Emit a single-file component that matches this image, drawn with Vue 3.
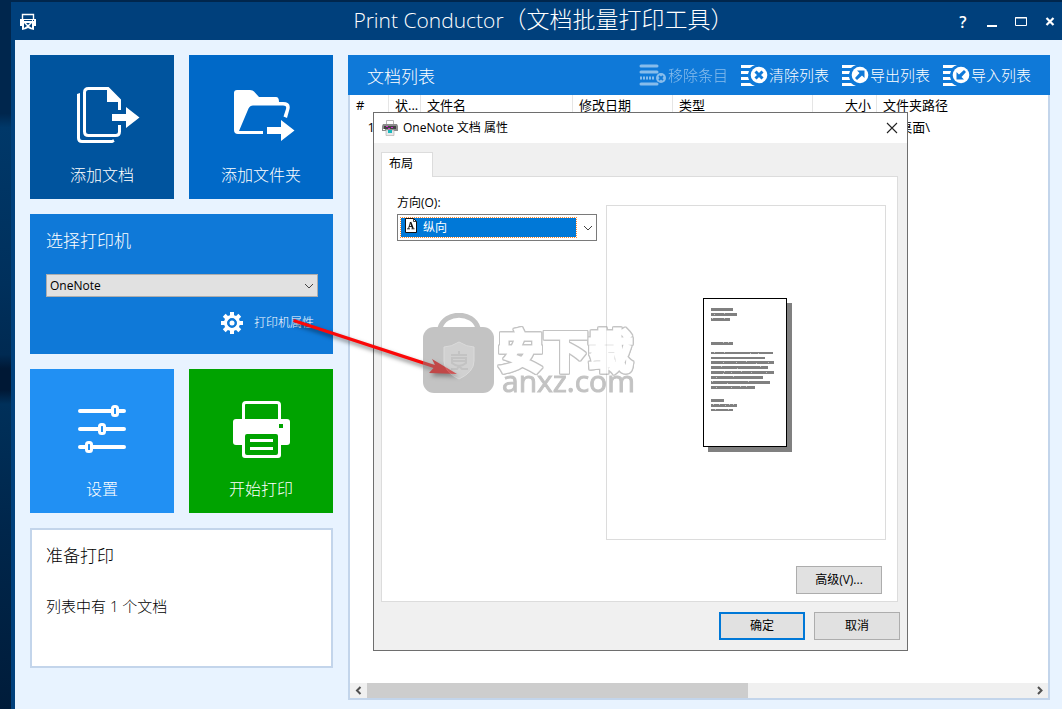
<script setup>
import { ref } from 'vue'

const printer = ref('OneNote')
const orientation = ref('纵向')

const columns = [
  { label: '#', cls: 'c-num' },
  { label: '状...', cls: 'c-state' },
  { label: '文件名', cls: 'c-name' },
  { label: '修改日期', cls: 'c-date' },
  { label: '类型', cls: 'c-type' },
  { label: '大小', cls: 'c-size' },
  { label: '文件夹路径', cls: 'c-path' }
]

const actions = [
  { label: '移除条目', kind: 'remove', disabled: true },
  { label: '清除列表', kind: 'clear' },
  { label: '导出列表', kind: 'export' },
  { label: '导入列表', kind: 'import' }
]

const previewLines = [
  [11, 22, 3], [16, 26, 3], [21, 19, 3],
  [45, 22, 3],
  [55, 62, 2], [60, 54, 2], [64, 63, 3], [69, 57, 3], [74, 63, 3], [79, 52, 3], [84, 59, 3], [89, 44, 3],
  [102, 13, 3], [107, 26, 3], [112, 22, 2]
]
const specks = [
  [12, 17], [22, 16], [10, 21], [22, 21], [21, 45], [26, 45], [12, 55], [22, 55], [48, 56], [56, 56],
  [21, 65], [34, 65], [44, 64], [54, 66], [66, 65], [19, 69], [35, 71], [58, 69], [22, 74], [21, 76],
  [29, 75], [39, 74], [49, 75], [64, 75], [14, 80], [31, 79], [10, 84], [25, 86], [46, 84],
  [14, 90], [29, 90], [38, 89], [44, 89], [11, 107], [17, 107], [23, 108], [27, 107], [31, 107], [13, 112], [26, 112]
]
</script>

<template>
  <div class="desktop">
    <div class="window">
      <header class="titlebar">
        <svg class="app-icon" width="18" height="18" viewBox="0 0 18 18">
          <path d="M3.500 6V1.500h11V6" fill="none" stroke="#fff" stroke-width="1.400" />
          <path fill="#fff" fill-rule="evenodd" d="M1 6h16v7h-2v4l-4-1-2-1-2 1-4 1v-4H1zM5 7v1h8V7zM14 7v1h1V7zM5 10v5l3-2zM13 10l-3 3 3 2zM7 10l2 2 2-2z" />
        </svg>
        <h1><span>Print Conductor</span>（文档批量打印工具）</h1>
        <div class="win-buttons">
          <button type="button" aria-label="帮助">?</button>
          <button type="button" aria-label="最小化"><svg width="12" height="14" viewBox="0 0 12 14"><path d="M1 11h10" stroke="#fff" stroke-width="2" /></svg></button>
          <button type="button" aria-label="最大化"><svg width="12" height="14" viewBox="0 0 12 14"><path d="M.5 2.500h11v8H.5zM0 3h12" fill="none" stroke="#fff" stroke-width="1" /></svg></button>
          <button type="button" aria-label="关闭"><svg width="12" height="14" viewBox="0 0 12 14"><path d="M2.500 3l7 7M9.500 3l-7 7" stroke="#fff" stroke-width="2.200" /></svg></button>
        </div>
      </header>

      <main class="content">
        <aside class="side">
          <div class="tiles">
            <button type="button" class="tile navy">
              <svg width="144" height="104" viewBox="0 0 144 104">
                <g fill="none" stroke="#fff" stroke-width="3">
                  <path d="M89.500 55V45L78 33.500H58.500q-4 0-4 4v39q0 4 4 4h27q4 0 4-4V70" />
                  <path d="M48.500 40v43q0 3.500 3.500 3.500h30l2-1" />
                </g>
                <path fill="#fff" d="M77 33v14h13v-2zM82 59h14v-7l13.500 10.500L96 73v-7H82zM47 39l3-1v3h-3z" />
              </svg>
              <span>添加文档</span>
            </button>
            <button type="button" class="tile blue">
              <svg width="144" height="104" viewBox="0 0 144 104">
                <path fill="#fff" d="M45 38q0-3 3-3h13q3 0 4 1.500l5 5.500h17q3 0 3 5h4q8 0 6.500 7L98 63l-3.500-1.500L97 54q1-3.500-3-3.500H64q-3 0-4.500 3L50 76h24v3H49q-4 0-4-4zM78 72h14v-7l13.500 10.500L92 86v-7H78z" />
              </svg>
              <span>添加文件夹</span>
            </button>
          </div>

          <section class="printer">
            <h2><label for="printer">选择打印机</label></h2>
            <div class="select-wrap">
              <select id="printer" v-model="printer"><option>OneNote</option></select>
              <svg width="10" height="6" viewBox="0 0 10 6"><path d="M1 1l4 4 4-4" fill="none" stroke="#444" /></svg>
            </div>
            <button type="button" class="props">
              <svg width="24" height="24" viewBox="-12 -12 24 24">
                <g fill="#fff">
                  <rect v-for="a in 8" :key="a" x="-2" y="-11" width="4" height="6" :transform="`rotate(${a * 45})`" />
                </g>
                <circle r="6.500" fill="none" stroke="#fff" stroke-width="3" />
                <circle r="2.500" fill="#fff" />
              </svg>
              <span>打印机属性</span>
            </button>
          </section>

          <div class="tiles">
            <button type="button" class="tile sky">
              <svg width="144" height="104" viewBox="0 0 144 104">
                <path d="M50 42h44M50 60h44M50 78h44" stroke="#fff" stroke-width="4" stroke-linecap="round" />
                <g fill="#2190f3" stroke="#fff" stroke-width="3">
                  <rect x="82.500" y="37.500" width="5" height="9" rx="2" />
                  <rect x="69.500" y="55.500" width="5" height="9" rx="2" />
                  <rect x="56.500" y="73.500" width="5" height="9" rx="2" />
                </g>
              </svg>
              <span>设置</span>
            </button>
            <button type="button" class="tile green">
              <svg width="144" height="104" viewBox="0 0 144 104">
                <path d="M54.500 52V36q0-2.500 2.500-2.500h31q2.500 0 2.500 2.500v16" fill="none" stroke="#fff" stroke-width="3" />
                <rect x="44" y="50" width="57" height="26" rx="3" fill="#fff" />
                <rect x="53" y="62" width="39" height="27" rx="3" fill="#fff" />
                <path fill="#00a300" d="M90 55h4v4h-4zM58 65h29q2 0 2 2v17q0 2-2 2H58q-2 0-2-2V67q0-2 2-2z" />
                <path d="M61 71.500h23M61 79.500h23" stroke="#fff" stroke-width="3" />
              </svg>
              <span>开始打印</span>
            </button>
          </div>

          <section class="status">
            <h2>准备打印</h2>
            <p>列表中有 1 个文档</p>
          </section>
        </aside>

        <section class="list">
          <header class="list-head">
            <h2>文档列表</h2>
            <div class="actions">
              <button v-for="a in actions" :key="a.kind" type="button" :disabled="a.disabled">
                <svg width="29" height="22" viewBox="0 0 29 22">
                  <template v-if="a.kind === 'remove'">
                    <path d="M2 2h16M2 8h16M2 20h16" stroke="#fff" stroke-width="3" stroke-linecap="round" />
                    <path d="M1 14h15" stroke="#fff" stroke-width="3" stroke-dasharray="2 1" />
                    <circle cx="22" cy="14" r="5" fill="#fff" />
                    <path d="M20 12l4 4M24 12l-4 4" stroke="#0f79d8" stroke-width="1.800" />
                  </template>
                  <template v-else>
                    <path d="M1 1h14q-3 1-5 3H1zM1 7h8l-1 3H1zM1 13h7l1 3H1zM1 19h9q2 2 5 3H1z" fill="#fff" />
                    <circle cx="19" cy="11" r="8.300" fill="#fff" />
                    <path v-if="a.kind === 'clear'" d="M15.500 7.500l7 7M22.500 7.500l-7 7" stroke="#0f79d8" stroke-width="3" />
                    <path v-else-if="a.kind === 'export'" fill="#0f79d8" d="M16 6.500h7.500V14L21 11.500l-5 4.500-2-2 4.500-5z" />
                    <path v-else fill="#0f79d8" d="M22 15.500h-7.500V8l2.500 2.500L22 6l2 2-4.500 5z" />
                  </template>
                </svg>
                <span>{{ a.label }}</span>
              </button>
            </div>
          </header>
          <div class="table-area">
            <table>
              <thead>
                <tr><th v-for="c in columns" :key="c.cls" :class="c.cls">{{ c.label }}</th></tr>
              </thead>
              <tbody>
                <tr><td class="c-num">1</td><td></td><td></td><td></td><td></td><td></td><td>C:\桌面\</td></tr>
              </tbody>
            </table>
          </div>
          <div class="scrollbar">
            <button type="button" aria-label="向左滚动"><svg width="17" height="15" viewBox="0 0 17 15"><path d="M10.500 4L7 7.500l3.500 3.500" fill="none" stroke="#505050" stroke-width="2" /></svg></button>
            <div class="track"><div class="thumb"></div></div>
            <button type="button" aria-label="向右滚动"><svg width="17" height="15" viewBox="0 0 17 15"><path d="M7 4l3.500 3.500L7 11" fill="none" stroke="#505050" stroke-width="2" /></svg></button>
          </div>
        </section>
      </main>
    </div>

    <div class="dialog" role="dialog" aria-labelledby="dialog-title">
      <header class="dialog-head">
        <svg width="16" height="16" viewBox="0 0 16 16">
          <path d="M4.500 6V.5h7V6" fill="#fff" stroke="#b5b5b5" />
          <path d="M1 4h14l1 2v5H0V6z" fill="#8b8b8b" />
          <path d="M2 6h12v3H2z" fill="#424242" />
          <path d="M4 6h2v1H4zM9 7h2v1H9zM6 8h2v1H6z" fill="#d42fd0" />
          <path d="M4 10h8v5.500H4z" fill="#e9e9e9" stroke="#aaa" stroke-width=".6" />
          <path d="M6 10h4v3H6z" fill="#19b8bd" />
          <path d="M1 9h2v1H1z" fill="#fff" />
        </svg>
        <h2 id="dialog-title">OneNote 文档 属性</h2>
        <button type="button" class="close" aria-label="关闭"><svg width="12" height="12" viewBox="0 0 12 12"><path d="M1 1l10 10M11 1L1 11" stroke="#222" stroke-width="1.100" /></svg></button>
      </header>
      <div class="dialog-body">
        <button type="button" class="tab">布局</button>
        <div class="sheet">
          <div class="sheet-row">
            <div class="field">
              <label for="orientation">方向(O):</label>
              <div class="orient">
                <select id="orientation" v-model="orientation"><option>纵向</option><option>横向</option></select>
                <svg class="page-icon" width="12" height="15" viewBox="0 0 12 15">
                  <path d="M.5.5h8l3 3v11H.5z" fill="#fff" stroke="#111" />
                  <path d="M8.500.5v3h3" fill="none" stroke="#111" stroke-width=".8" />
                  <path d="M5.500 4L3.500 10.500M2 10.800h3M6.500 10.800h3M4 8.500h3.500" fill="none" stroke="#111" stroke-width=".9" />
                  <path d="M5.500 4l2.500 6.500" stroke="#111" stroke-width="1.600" />
                </svg>
                <svg class="chev" width="10" height="6" viewBox="0 0 10 6"><path d="M1 1l4 4 4-4" fill="none" stroke="#444" /></svg>
              </div>
            </div>
            <div class="preview">
              <svg width="90" height="155" viewBox="0 0 90 155" shape-rendering="crispEdges">
                <path d="M6 6h84v149H6z" fill="#808080" />
                <path d="M1.500 1.500h83v148h-83z" fill="#fff" stroke="#000" />
                <g fill="#808080">
                  <rect v-for="(l, i) in previewLines" :key="i" x="9" :y="l[0]" :width="l[1]" :height="l[2]" />
                </g>
                <g fill="#c8c8c8">
                  <rect v-for="(s, i) in specks" :key="i" :x="s[0]" :y="s[1]" width="1" height="1" />
                </g>
              </svg>
            </div>
          </div>
          <button type="button" class="btn advanced">高级(V)...</button>
        </div>
        <footer class="dialog-foot">
          <button type="button" class="btn primary">确定</button>
          <button type="button" class="btn">取消</button>
        </footer>
      </div>
    </div>

    <svg class="pointer" width="180" height="76" viewBox="0 0 180 76">
      <g class="pointer-shape">
        <path d="M4 5L145 51l-3-6 25 15-28-1 4.500-5L3 8z" fill="#fb0808" />
      </g>
    </svg>

    <div class="watermark" aria-hidden="true">
      <svg width="72" height="82" viewBox="0 0 72 82">
        <path d="M17 15C22-2 50-2 55 15" fill="none" stroke="#888" stroke-width="5" />
        <rect x="0" y="14" width="71" height="66" rx="11" fill="#888" />
        <path d="M36 29q8 5 15 5v14q0 11-15 18-15-7-15-18V34q7 0 15-5z" fill="#a4a4a4" stroke="#b8b8b8" />
        <path d="M36 38v3M28 42h16M29 45h14v5q-7 6-14 0zM29 48h14M28 56h6l2-3 3 3h6" fill="none" stroke="#888" stroke-width="2" />
      </svg>
      <div class="wm-text">
        <span class="wm-cn">安下载</span>
        <span class="wm-en">anxz.com</span>
      </div>
    </div>
  </div>
</template>

<style>
body { margin: 0; }
</style>

<style scoped>
* { box-sizing: border-box; }
.desktop {
  position: relative;
  min-height: 100vh;
  display: flex;
  padding: 2px 0 0 11px;
  overflow: hidden;
  background: linear-gradient(180deg, #00264d 0, #00264d 16%, #003869 18%, #00305c 40%, #002a52 50%, #001835 52%, #001835 55%, #00305a 57%, #00264b 75%, #001c3a 100%);
  font-family: "Open Sans", "Noto Sans CJK SC", sans-serif;
  font-size: 13px;
  color: #000;
}
h1, h2, p { margin: 0; font-weight: 300; }
button { font: inherit; color: inherit; border: 0; padding: 0; background: none; }
svg { display: block; flex: none; }
.window {
  flex: 1;
  min-width: 0;
  display: flex;
  flex-direction: column;
  border-left: 4px solid #00407c;
  background: #e8f3ff;
}
.titlebar {
  display: grid;
  grid-template-columns: 1fr auto 1fr;
  align-items: center;
  height: 38px;
  padding: 0 6px 0 4px;
  background: #00407c;
  color: #fff;
}
h1 { padding: 0 0 4px 12px; font-size: 23px; line-height: 34px; white-space: nowrap; }
h1 span { font-size: 21px; }
.win-buttons { display: flex; justify-content: flex-end; gap: 17px; }
.win-buttons button {
  width: 12px;
  height: 16px;
  display: grid;
  place-items: center;
  font-size: 16px;
  line-height: 16px;
  font-weight: 600;
}
.content { flex: 1; display: flex; gap: 15px; padding: 15px 12px 9px 15px; }
.side { width: 303px; flex: none; display: flex; flex-direction: column; gap: 15px; }
.tiles { display: grid; grid-template-columns: 1fr 1fr; gap: 15px; }
.tile {
  display: flex;
  flex-direction: column;
  align-items: center;
  padding-bottom: 8px;
  color: #fff;
  font-size: 16px;
  line-height: 32px;
  font-weight: 300;
}
.navy { background: #00549e; }
.blue { background: #0069c8; }
.sky { background: #2190f3; }
.green { background: #00a300; }
.printer {
  display: flex;
  flex-direction: column;
  padding: 14px 15px 19px 16px;
  background: #0f79d8;
  color: #fff;
}
.printer h2, .status h2, .list-head h2 { font-size: 17px; line-height: 26px; }
.select-wrap { display: grid; align-items: center; margin: 20px 0 14px; }
.select-wrap > *, .orient > * { grid-area: 1 / 1; }
.select-wrap svg { justify-self: end; margin-right: 4px; pointer-events: none; }
select { appearance: none; font: inherit; width: 100%; border-radius: 0; outline: none; }
.select-wrap select {
  height: 23px;
  padding: 0 3px;
  border: 1px solid #adadad;
  background: #e1e1e1;
  color: #000;
  font-size: 12px;
}
.props {
  align-self: flex-end;
  display: flex;
  align-items: center;
  gap: 10px;
  margin-right: 4px;
  font-size: 12px;
  line-height: 24px;
  font-weight: 300;
}
.status { height: 140px; padding: 13px 14px; border: 2px solid #c3d5eb; background: #fff; }
.status p { margin-top: 26px; font-size: 15px; line-height: 22px; }
.list {
  flex: 1;
  min-width: 0;
  display: flex;
  flex-direction: column;
  border: 2px solid #c3d5eb;
  border-top: 0;
  background: #fff;
}
.list-head {
  display: flex;
  align-items: center;
  justify-content: space-between;
  height: 40px;
  margin: 0 -2px;
  padding: 0 19px;
  background: #0f79d8;
  color: #fff;
}
.list-head h2 { padding-top: 3px; }
.actions { display: flex; gap: 12px; }
.actions button { display: flex; align-items: center; font-size: 15px; line-height: 22px; font-weight: 300; }
.actions button:disabled { opacity: .5; }
.table-area { flex: 1; overflow: hidden; }
table { width: 100%; table-layout: fixed; border-collapse: separate; border-spacing: 0; }
th, td { padding: 0 6px; font-weight: 400; text-align: left; white-space: nowrap; overflow: hidden; line-height: 20px; }
th { border-right: 1px solid #e5e5e5; padding-right: 0; }
td { line-height: 24px; }
.c-num { width: 39px; }
td.c-num { text-align: right; padding-right: 14px; }
.c-state { width: 32px; }
.c-name { width: 152px; }
.c-date { width: 100px; }
.c-type { width: 140px; }
.c-size { width: 64px; text-align: right; padding-right: 5px; }
.c-path { border-right: 0; }
.scrollbar { display: flex; height: 15px; background: #f0f0f0; }
.track { flex: 1; display: flex; }
.thumb { width: 57.4%; background: #cdcdcd; }
.dialog {
  position: absolute;
  left: 373px;
  top: 112px;
  width: 535px;
  border: 1px solid #6e6e6e;
  background: #f0f0f0;
  font-size: 12px;
  line-height: 18px;
}
.dialog-head { display: flex; align-items: center; gap: 5px; height: 30px; padding: 0 9px 0 8px; background: #fff; }
.dialog-head h2 { flex: 1; font-size: 12px; font-weight: 400; }
.dialog-body { display: flex; flex-direction: column; padding: 9px 7px 10px; }
.tab {
  align-self: flex-start;
  position: relative;
  z-index: 1;
  width: 52px;
  height: 25px;
  margin-bottom: -1px;
  padding: 0 0 2px 7px;
  text-align: left;
  background: #fff;
  border: 1px solid #dcdcdc;
  border-bottom: 0;
}
.sheet {
  display: flex;
  flex-direction: column;
  margin-right: 2px;
  padding: 16px 11px 7px 15px;
  background: #fff;
  border: 1px solid #dcdcdc;
}
.sheet-row { display: flex; gap: 9px; }
.field { width: 200px; }
.field label { display: block; line-height: 18px; margin-bottom: 2px; }
.orient { display: grid; align-items: center; height: 27px; border: 1px solid #7a7a7a; padding: 2px; background: #fff; }
.orient select {
  width: auto;
  margin-right: 17px;
  height: 21px;
  padding: 0 22px;
  color: #fff;
  background: #0078d7;
  border: 1px dotted #ff8728;
  background-clip: padding-box;
  background-color: #0078d7;
  box-shadow: inset 0 0 0 1px #0078d7;
}
.orient .page-icon { margin: -4px 0 0 5px; pointer-events: none; }
.chev { justify-self: end; margin-right: 1px; pointer-events: none; }
.preview { flex: 1; min-height: 335px; margin-top: 12px; display: grid; place-items: center; border: 1px solid #dcdcdc; }
.preview svg { margin: 4px 0 0 2px; }
.btn { width: 86px; height: 28px; border: 1px solid #adadad; background: #e1e1e1; }
.btn.primary { border: 2px solid #0078d7; }
.advanced { align-self: flex-end; margin: 26px 4px 0 0; }
.dialog-foot { display: flex; justify-content: flex-end; gap: 9px; margin-top: 10px; }
.field label { padding-top: 0; margin-top: 0; line-height: 19px; }
.pointer { position: absolute; left: 290px; top: 314px; pointer-events: none; }
.pointer-shape { filter: drop-shadow(2px 3px 2px rgba(0, 0, 0, .5)); }
.watermark {
  position: absolute;
  left: 423px;
  top: 313px;
  display: flex;
  gap: 3px;
  opacity: .5;
  pointer-events: none;
}
.wm-text { display: flex; flex-direction: column; padding-top: 14px; }
.wm-cn {
  font-family: "Noto Sans CJK SC", sans-serif;
  font-size: 45px;
  line-height: 44px;
  font-weight: 700;
  color: #fff;
  -webkit-text-stroke: 3px #fff;
  filter: drop-shadow(1px 0 0 #888) drop-shadow(-1px 0 0 #888) drop-shadow(0 1px 0 #888) drop-shadow(0 -1px 0 #888);
}
.wm-en { padding-left: 4px; font-size: 30px; line-height: 20px; font-weight: 400; color: #888; -webkit-text-stroke: 1px #888; }
</style>
